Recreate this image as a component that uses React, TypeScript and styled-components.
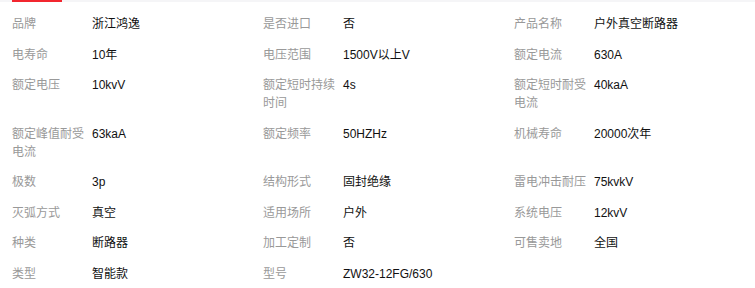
import React, { FC } from 'react'
import styled, { createGlobalStyle } from 'styled-components'

type Spec = {
  label: string,
  value: string
}

const specs: Array<Spec> = [
  { label: '品牌', value: '浙江鸿逸' },
  { label: '是否进口', value: '否' },
  { label: '产品名称', value: '户外真空断路器' },
  { label: '电寿命', value: '10年' },
  { label: '电压范围', value: '1500V以上V' },
  { label: '额定电流', value: '630A' },
  { label: '额定电压', value: '10kvV' },
  { label: '额定短时持续时间', value: '4s' },
  { label: '额定短时耐受电流', value: '40kaA' },
  { label: '额定峰值耐受电流', value: '63kaA' },
  { label: '额定频率', value: '50HZHz' },
  { label: '机械寿命', value: '20000次年' },
  { label: '极数', value: '3p' },
  { label: '结构形式', value: '固封绝缘' },
  { label: '雷电冲击耐压', value: '75kvkV' },
  { label: '灭弧方式', value: '真空' },
  { label: '适用场所', value: '户外' },
  { label: '系统电压', value: '12kvV' },
  { label: '种类', value: '断路器' },
  { label: '加工定制', value: '否' },
  { label: '可售卖地', value: '全国' },
  { label: '类型', value: '智能款' },
  { label: '型号', value: 'ZW32-12FG/630' }
]

const GlobalStyle = createGlobalStyle`
  body {
    margin: 0;
    background: #fff;
    font-family: Arial, "Liberation Sans", "Noto Sans CJK SC", sans-serif;
  }
`

const Panel = styled.div`
  width: 755px;
  background: #fff;
`

const TabStrip = styled.div`
  height: 2px;
  background: #f5f5f7;
  padding-left: 12px;
`

const ActiveTab = styled.div`
  width: 50px;
  height: 2px;
  background: #f2262f;
`

const SpecGrid = styled.div`
  display: grid;
  grid-template-columns: repeat(3, 251px);
  padding: 7px 0 0 12px;
`

const SpecItem = styled.div`
  display: flex;
  align-items: flex-start;
  padding: 6px 0 6.5px;
  font-size: 12px;
  line-height: 18px;
`

const SpecLabel = styled.span`
  flex: 0 0 74px;
  margin-right: 6px;
  color: #999;
  word-break: break-all;
`

const SpecValue = styled.span`
  flex: 1;
  color: #111;
`

const App: FC = () => {
  return (
    <Panel>
      <GlobalStyle />
      <TabStrip>
        <ActiveTab />
      </TabStrip>
      <SpecGrid>
        {specs.map((s, index) =>
          <SpecItem key={`spec-${index}`}>
            <SpecLabel>{s.label}</SpecLabel>
            <SpecValue>{s.value}</SpecValue>
          </SpecItem>)}
      </SpecGrid>
    </Panel>
  )
}

export default App
